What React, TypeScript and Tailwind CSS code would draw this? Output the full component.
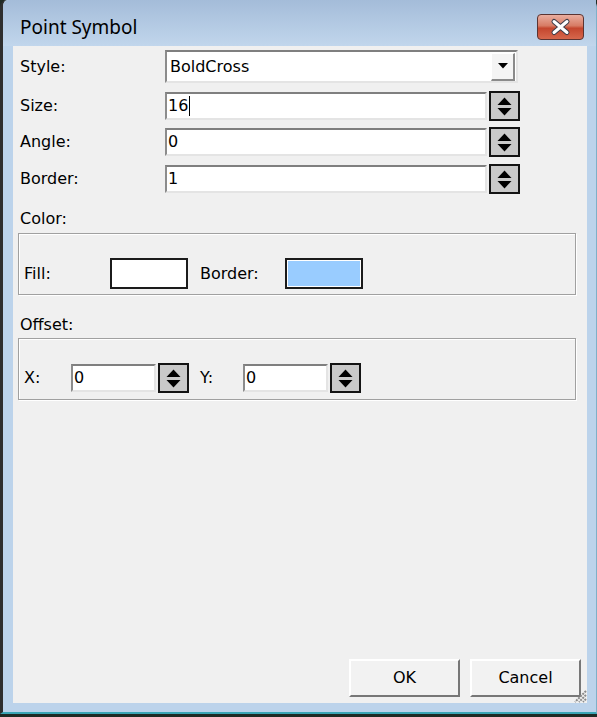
import React from 'react';

const font = { fontFamily: '"DejaVu Sans", Verdana, sans-serif' };

function SpinButton() {
    return (
        <svg width="31" height="30" viewBox="0 0 31 30" className="shrink-0">
            <rect x="1" y="1" width="29" height="28" fill="#c9c9c9" stroke="#141414" strokeWidth="2" />
            <polygon points="8.5,14 22.5,14 15.5,6.5" fill="#000" />
            <polygon points="8.5,17 22.5,17 15.5,24.5" fill="#000" />
        </svg>
    );
}

function TextBox({ value, width, caret = false }: { value: string; width: string; caret?: boolean }) {
    return (
        <div
            className={`${width} h-[28px] flex items-center bg-white border-t-2 border-l-2 border-t-[#7f7f7f] border-l-[#8c8c8c] border-b-2 border-r-2 border-b-[#e4e4e4] border-r-[#e4e4e4] pl-[1px] text-[16px] text-black`}
        >
            <span>{value}</span>
            {caret && <span className="ml-[1px] inline-block h-[20px] w-px bg-black" />}
        </div>
    );
}

function SpinRow({ label, value, caret = false }: { label: string; value: string; caret?: boolean }) {
    return (
        <div className="flex h-[30px] items-center">
            <div className="w-[145px] text-[16px] text-black">{label}</div>
            <TextBox value={value} width="w-[322px]" caret={caret} />
            <div className="ml-[2px]">
                <SpinButton />
            </div>
        </div>
    );
}

export default function App() {
    return (
        <div className="w-[597px] h-[717px] bg-[#1f2a24] overflow-hidden" style={font}>
            <div className="w-[597px] h-[714px] flex flex-col rounded-tl-[7px] rounded-tr-[7px] border-l-[3px] border-l-[#2e2e2e] border-r border-r-[#7fb0c8] border-b-2 border-b-[#3aa5b5] bg-[#bcd3eb]">
                {/* title bar */}
                <div className="h-[46px] shrink-0 flex items-start justify-between rounded-tl-[6px] bg-gradient-to-b from-[#a4bcd9] to-[#c1d6ec]">
                    <div
                        className="pl-[17px] pt-[16px] text-[19px] leading-[22px] text-black"
                        style={{ fontFamily: '"Noto Sans", "Open Sans", sans-serif' }}
                    >
                        Point Symbol
                    </div>
                    <div className="mr-[12px] mt-[14px]">
                        <svg width="47" height="26" viewBox="0 0 47 26">
                            <defs>
                                <linearGradient id="closeBg" x1="0" y1="0" x2="0" y2="1">
                                    <stop offset="0" stopColor="#eab0a2" />
                                    <stop offset="0.45" stopColor="#d77b64" />
                                    <stop offset="0.55" stopColor="#c4462e" />
                                    <stop offset="1" stopColor="#d7694e" />
                                </linearGradient>
                            </defs>
                            <rect x="0.5" y="0.5" width="46" height="25" rx="3.5" fill="url(#closeBg)" stroke="#5b3432" />
                            <path d="M17 7.5 L30 18.5 M30 7.5 L17 18.5" stroke="#3d3d4a" strokeWidth="5" strokeLinecap="round" />
                            <path d="M17 7.5 L30 18.5 M30 7.5 L17 18.5" stroke="#ffffff" strokeWidth="3" strokeLinecap="round" />
                        </svg>
                    </div>
                </div>

                {/* client area */}
                <div className="flex-1 flex pl-[10px] pr-[9px] pb-[9px]">
                    <div className="relative flex-1 flex flex-col bg-[#f0f0f0]">
                        <div className="pl-[7px]">
                            {/* Style */}
                            <div className="mt-[4px] flex h-[33px] items-center">
                                <div className="w-[145px] text-[16px] text-black">Style:</div>
                                <div className="w-[353px] h-[33px] flex items-center bg-white border-t-2 border-l-2 border-t-[#7f7f7f] border-l-[#8c8c8c] border-b-2 border-r-2 border-b-[#e4e4e4] border-r-[#e4e4e4]">
                                    <span className="pl-[3px] flex-1 text-[16px] text-black">BoldCross</span>
                                    <div className="mr-[1px] h-[28px] w-[24px] flex items-center justify-center bg-[#f4f4f4] border-t border-l border-t-white border-l-white border-b-2 border-r-2 border-b-[#8a8a8a] border-r-[#8a8a8a]">
                                        <svg width="10" height="6" viewBox="0 0 10 6">
                                            <polygon points="0,0 10,0 5,5.5" fill="#000" />
                                        </svg>
                                    </div>
                                </div>
                            </div>

                            <div className="mt-[8px]">
                                <SpinRow label="Size:" value="16" caret />
                            </div>
                            <div className="mt-[6px]">
                                <SpinRow label="Angle:" value="0" />
                            </div>
                            <div className="mt-[7px]">
                                <SpinRow label="Border:" value="1" />
                            </div>
                        </div>

                        {/* Color */}
                        <div className="mt-[15px] h-[20px] pl-[7px] text-[16px] leading-[20px] text-black">Color:</div>
                        <div className="ml-[5px] mt-[4px] w-[558px] h-[62px] flex items-end border border-[#a0a0a0] shadow-[inset_1px_1px_0_#fff,1px_1px_0_#fff] pl-[5px] pb-[5px]">
                            <div className="flex h-[31px] items-center">
                                <div className="w-[86px] text-[16px] text-black">Fill:</div>
                                <div className="w-[78px] h-[31px] bg-white border-2 border-[#1b1b1b]" />
                                <div className="ml-[12px] w-[85px] text-[16px] text-black">Border:</div>
                                <div className="w-[78px] h-[31px] border-2 border-[#1b1b1b] bg-[#99ccff] shadow-[inset_0_0_0_1px_#fff]" />
                            </div>
                        </div>

                        {/* Offset */}
                        <div className="mt-[20px] h-[20px] pl-[7px] text-[16px] leading-[20px] text-black">Offset:</div>
                        <div className="ml-[5px] mt-[3px] w-[558px] h-[62px] flex items-end border border-[#a0a0a0] shadow-[inset_1px_1px_0_#fff,1px_1px_0_#fff] pl-[5px] pb-[6px]">
                            <div className="flex h-[30px] items-center">
                                <div className="w-[47px] text-[16px] text-black">X:</div>
                                <TextBox value="0" width="w-[85px]" />
                                <div className="ml-[2px]">
                                    <SpinButton />
                                </div>
                                <div className="ml-[11px] w-[43px] text-[16px] text-black">Y:</div>
                                <TextBox value="0" width="w-[85px]" />
                                <div className="ml-[2px]">
                                    <SpinButton />
                                </div>
                            </div>
                        </div>

                        {/* buttons */}
                        <div className="mt-auto flex justify-end gap-[10px] pr-[6px] pb-[6px]">
                            <button className="w-[111px] h-[38px] bg-[#f2f2f2] border-t-2 border-l-2 border-t-white border-l-white border-b-2 border-r-2 border-b-[#777] border-r-[#777] text-[16px] text-black">
                                OK
                            </button>
                            <button className="w-[111px] h-[38px] bg-[#f2f2f2] border-t-2 border-l-2 border-t-white border-l-white border-b-2 border-r-2 border-b-[#777] border-r-[#777] text-[16px] text-black">
                                Cancel
                            </button>
                        </div>

                        {/* size grip */}
                        <svg className="absolute right-0 bottom-0" width="15" height="15" viewBox="0 0 15 15">
                            <path d="M14 3 L3 14 M14 7 L7 14 M14 11 L11 14" stroke="#8a8a8a" strokeWidth="2" strokeDasharray="2 1" />
                        </svg>
                    </div>
                </div>
            </div>
        </div>
    );
}
